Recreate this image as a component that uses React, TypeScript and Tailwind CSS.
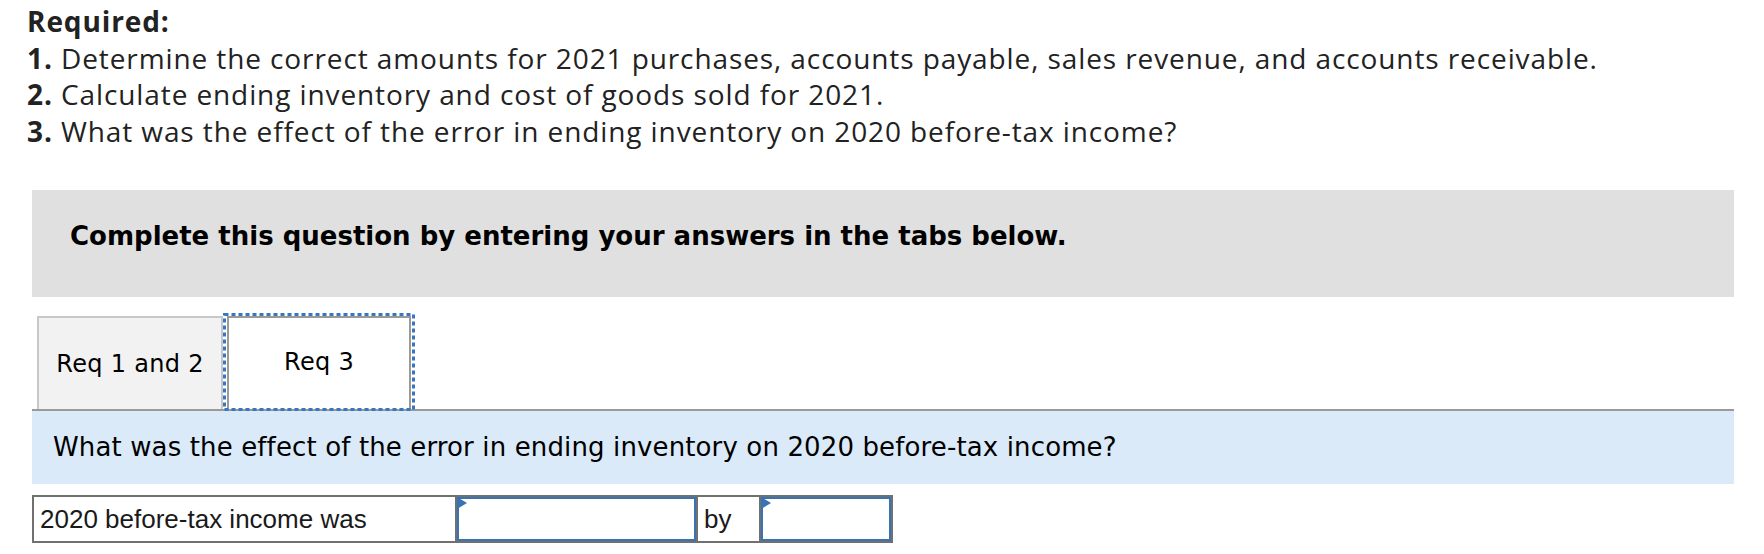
export default function App() {
  return (
    <div className="min-h-[554px] w-[1764px] bg-white text-[#222]">
      {/* Required list */}
      <div className="pl-[27px] pt-[3px] font-['Open_Sans',sans-serif] text-[28px] leading-[36.5px] tracking-[0.9px]">
        <div className="font-bold">Required:</div>
        <div>
          <span className="font-bold">1.</span> Determine the correct amounts for 2021 purchases, accounts payable, sales
          revenue, and accounts receivable.
        </div>
        <div>
          <span className="font-bold">2.</span> Calculate ending inventory and cost of goods sold for 2021.
        </div>
        <div>
          <span className="font-bold">3.</span> What was the effect of the error in ending inventory on 2020 before-tax
          income?
        </div>
      </div>

      <div className="ml-[32px] mr-[30px] mt-[41px]">
        {/* Instruction banner */}
        <div className="flex h-[107px] items-center bg-[#e0e0e0] pb-[14px] pl-[38px] font-['DejaVu_Sans',Verdana,sans-serif] text-[26px] font-bold text-black">
          Complete this question by entering your answers in the tabs below.
        </div>

        {/* Tabs */}
        <div className="mt-[16px] flex items-end border-b-2 border-[#9a9a9a] pl-[5px] font-['DejaVu_Sans',Verdana,sans-serif] text-[24px] tracking-[0.3px] text-black">
          <div className="flex h-[93px] w-[186px] items-center justify-center border-x-2 border-t-2 border-[#c8c8c8] bg-[#f2f2f2]">
            Req 1 and 2
          </div>
          <div className="relative -mb-[2px] flex h-[98px] w-[192px] items-center justify-center">
            <div className="absolute inset-x-[4px] bottom-[2px] top-[3px] border-2 border-b-0 border-[#9a9a9a]" />
            <svg className="absolute inset-0" width="192" height="98" viewBox="0 0 192 98">
              <rect x="1.5" y="1.5" width="189" height="95" fill="none" stroke="#3a76c0" strokeWidth="3" strokeDasharray="4 3" />
            </svg>
            <span className="relative">Req 3</span>
          </div>
        </div>

        {/* Question */}
        <div className="flex h-[73px] items-center bg-[#daeaf8] pl-[21px] font-['DejaVu_Sans',Verdana,sans-serif] text-[26px] tracking-[0.13px] text-black">
          What was the effect of the error in ending inventory on 2020 before-tax income?
        </div>

        {/* Answer row */}
        <div className="mt-[11px] flex h-[48px] w-[861px] border-2 border-[#707070] font-['Liberation_Sans',Arial,sans-serif] text-[26px] text-[#1a1a1a]">
          <div className="flex w-[423px] items-center border-r-2 border-[#707070] pl-[6px]">2020 before-tax income was</div>
          <div className="relative w-[239px] border-2 border-[#3a72b6] bg-white">
            <svg className="absolute -left-[2px] -top-[2px]" width="10" height="12" viewBox="0 0 10 12">
              <polygon points="0,0 10,6 0,12" fill="#3a72b6" />
            </svg>
          </div>
          <div className="flex w-[65px] items-center border-x-2 border-[#707070] pl-[6px]">by</div>
          <div className="relative flex-1 border-2 border-[#3a72b6] bg-white">
            <svg className="absolute -left-[2px] -top-[2px]" width="10" height="12" viewBox="0 0 10 12">
              <polygon points="0,0 10,6 0,12" fill="#3a72b6" />
            </svg>
          </div>
        </div>
      </div>
    </div>
  );
}
